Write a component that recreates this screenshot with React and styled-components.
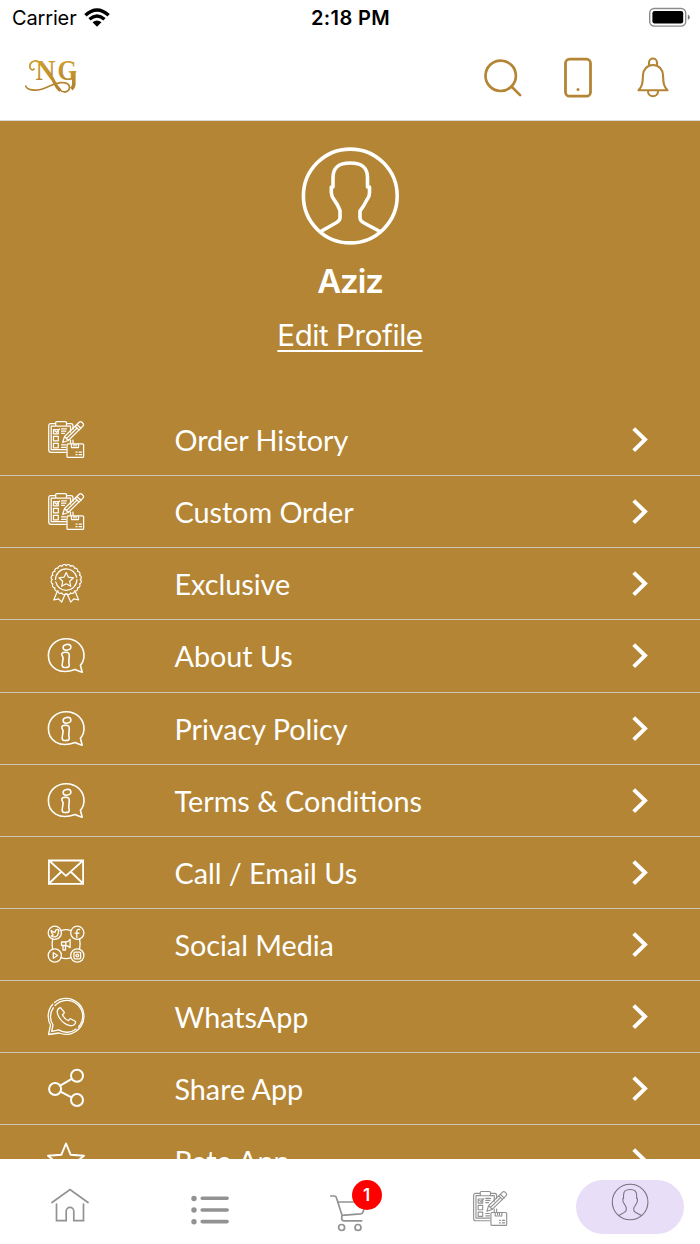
import React from "react";
import styled, { createGlobalStyle } from "styled-components";

const gold = "#b38534";

const GlobalStyle = createGlobalStyle`
  * { box-sizing: border-box; }
  body { margin: 0; background: #fff; }
`;

const Screen = styled.div`
  width: 700px;
  height: 1244px;
  display: flex;
  flex-direction: column;
  overflow: hidden;
  background: #fff;
  font-family: Inter, "Liberation Sans", sans-serif;
`;

const StatusBar = styled.header`
  height: 35px;
  flex: none;
  display: grid;
  grid-template-columns: 1fr auto 1fr;
  align-items: center;
  padding: 0 10px 0 12px;
  color: #000;
`;

const Carrier = styled.div`
  display: flex;
  align-items: center;
  gap: 7px;
  font-size: 20px;
  line-height: 36px;
  letter-spacing: -0.15px;

  svg {
    margin-bottom: 2px;
  }
`;

const Clock = styled.div`
  font-size: 20px;
  font-weight: 600;
  line-height: 36px;
  letter-spacing: 0.35px;
  margin-right: 1px;
`;

const BatterySlot = styled.div`
  display: flex;
  justify-content: flex-end;
  padding-bottom: 1px;
`;

const TopBar = styled.div`
  height: 86px;
  flex: none;
  display: flex;
  align-items: center;
  justify-content: space-between;
  padding: 0 27px 2px 22px;
  border-bottom: 1px solid #d9d8d8;
`;

const Actions = styled.div`
  display: flex;
  align-items: center;
  gap: 35.5px;
`;

const Content = styled.main`
  flex: 1;
  min-height: 0;
  overflow: hidden;
  background: ${gold};
  color: #fff;
`;

const Profile = styled.section`
  height: 283px;
  display: flex;
  flex-direction: column;
  align-items: center;
  padding-top: 25px;
`;

const Name = styled.h1`
  margin: 13px 0 0;
  font-size: 33px;
  line-height: 44px;
  font-weight: 600;
  letter-spacing: -1.1px;
`;

const EditLink = styled.a`
  margin-top: 14px;
  font-size: 29.5px;
  line-height: 36px;
  letter-spacing: -0.43px;
  color: #fff;
  text-decoration: underline;
  text-decoration-thickness: 2px;
  text-underline-offset: 4px;
  text-decoration-skip-ink: none;
`;

const Row = styled.div`
  height: 72.15px;
  display: grid;
  grid-template-columns: 38px 1fr 20px;
  column-gap: 89.5px;
  align-items: center;
  padding: 0 50px 1px 47px;
  border-bottom: 1.2px solid #cdc5b8;
`;

const Label = styled.span`
  font-family: Lato, sans-serif;
  font-size: 28.8px;
  line-height: 36px;
  letter-spacing: ${(p) => (p.$ligatures ? "0" : "-0.04px")};
  padding-top: 2px;
  white-space: nowrap;
`;

const TabBar = styled.nav`
  height: 85px;
  flex: none;
  display: grid;
  grid-template-columns: repeat(5, 1fr);
  background: #fff;
  color: #929292;
`;

const Tab = styled.div`
  display: flex;
  justify-content: center;
  align-items: flex-start;
  padding-top: ${(p) => p.$top}px;
`;

const ActivePill = styled.div`
  width: 108px;
  height: 54px;
  border-radius: 27px;
  background: #e8def7;
  color: #77737d;
  display: flex;
  justify-content: center;
  padding-top: 3px;
`;

const CartBox = styled.div`
  position: relative;
  width: 40px;
  height: 40px;
`;

const Badge = styled.span`
  position: absolute;
  left: 21.5px;
  top: -14.5px;
  width: 30px;
  height: 30px;
  border-radius: 50%;
  background: #f00;
  color: #fff;
  font-size: 17px;
  font-weight: 600;
  line-height: 30px;
  text-align: center;
`;

const Glyph = styled.svg`
  display: block;
  flex: none;
  overflow: visible;
  fill: none;
  stroke: currentColor;
  stroke-width: ${(p) => p.$stroke || 1.6};
  stroke-linecap: round;
  stroke-linejoin: round;
`;

const Icon = ({ w = 38, h = 38, box, stroke, color, children }) => (
  <Glyph width={w} height={h} viewBox={box || `0 0 ${w} ${h}`} $stroke={stroke} color={color}>
    {children}
  </Glyph>
);

const Logo = () => (
  <svg width="60" height="44" viewBox="22 56 60 44">
    <defs>
      <linearGradient id="sheen" gradientUnits="userSpaceOnUse" x1="0" y1="60" x2="0" y2="95">
        <stop offset="0" stopColor="#cfa02e" />
        <stop offset="1" stopColor="#ad7d30" />
      </linearGradient>
    </defs>
    <g fill="url(#sheen)" fontFamily="Liberation Serif, serif" fontSize="29" fontWeight="700">
      <text x="35.500" y="81" textLength="20" lengthAdjust="spacingAndGlyphs">N</text>
      <text x="57.500" y="81.300" textLength="19.500" lengthAdjust="spacingAndGlyphs">G</text>
    </g>
    <g fill="none" stroke="url(#sheen)" strokeLinecap="round">
      <path strokeWidth="1.700" d="M38 62.300c-5-1.500-9 2-8 6.200.6 2.500 3 3 4 1.500" />
      <path strokeWidth="3.200" d="M51.500 78c3 5 5 11 9 13.500" strokeLinecap="butt" />
      <path strokeWidth="1.700" d="M60 91c3 3 9 2.500 9.500-2 .4-4-4-6-9-5.300-8 1-13 5-19 6.500-6 1.500-14 1.300-15.700-3" />
      <path strokeWidth="3.600" d="M73.800 72v13q0 3-2.500 5" strokeLinecap="butt" />
    </g>
  </svg>
);

const Wifi = () => (
  <Icon w={26} h={19} stroke={3.4}>
    <path strokeLinecap="butt" d="M1.400 7.200Q13-3.300 24.600 7.200M5.500 11.300q7.500-6.400 15 0" />
    <path fill="currentColor" stroke="none" d="M8.500 14.200q4.500-3.600 9 0L13 18.800Z" />
  </Icon>
);

const Battery = () => (
  <Icon w={41} h={19} stroke={1.4}>
    <rect x=".7" y=".5" width="36" height="17.600" rx="4.500" stroke="#8b8b8b" />
    <rect x="3.400" y="3" width="30.800" height="12.600" rx="2.300" fill="#000" stroke="none" />
    <path d="M38.800 6.500q2 1 2 2.800t-2 2.800Z" fill="#777" stroke="none" />
  </Icon>
);

const SearchIcon = () => (
  <Icon w={40} h={42} color={gold} stroke={2.7}>
    <circle cx="18.700" cy="19.800" r="15.200" />
    <path d="m29.500 30.500 8.600 8.600" />
  </Icon>
);

const PhoneIcon = () => (
  <Icon w={40} h={42} color={gold} stroke={2.8}>
    <rect x="7.500" y="3.200" width="25" height="37" rx="4" />
    <circle cx="20" cy="33.500" r="1.500" fill="currentColor" stroke="none" />
  </Icon>
);

const BellIcon = () => (
  <Icon w={40} h={42} color={gold} stroke={2.1}>
    <path d="M16 9.600V6.500a4 4 0 0 1 8 0v3.100M20 9c-6 0-9.700 4.500-10 10-.4 7-.2 11-4.500 15.300h29c-4.300-4.300-4.100-8.300-4.500-15.300-.3-5.500-4-10-10-10ZM15 35.300a5 5 0 0 0 10 0" />
  </Icon>
);

const PersonIcon = ({ size, stroke }) => (
  <Icon w={size} h={size} box="0 0 100 100" stroke={stroke}>
    <circle cx="50.300" cy="50" r="46.900" />
    <path d="M20.700 85.500 34 78q6-3 6-6v-7.500L37.500 59 34 53.500q-2.500-3-2.700-7V41H33V32C33 20 40 17 50.300 17S67.500 20 67.500 32v9h2v6q0 4-2.700 7l-3.300 6-3.500 5v7q0 3 5 5.500l15 8" />
  </Icon>
);

const OrderIcon = ({ w = 38, stroke = 1.25 }) => (
  <Icon w={w} h={w} box="0 0 38 38" stroke={stroke}>
    <path d="M8.500 3.500H4Q1.700 3.500 1.700 6v24q0 2.400 2.500 2.400H19M19.500 3.500H24q2 0 2 2.500v3M8.500 6H4.200v23.700H19M19.500 6h4v6M26 20v3M23.500 20v3" />
    <rect x="8.700" y="1.600" width="10.800" height="4.500" rx="1" />
    <path d="M6.500 9.500h4.800v4.300H6.500ZM6.500 16.300h4.800v4.500H6.500ZM6.500 23.300h4.800v4.500H6.500ZM8 11l1.500 1.300L12.500 9M14.500 8.800h5M14.500 11h4.500M14.500 13.300h3M14.500 24.800h4M14.500 27.300h4" />
    <path d="m15.700 22.500 1.800-6L32.200 2.300q1.300-1.200 2.700 0l1 1q1.400 1.400 0 2.800L21.300 20.500ZM17.500 16.500l3.800 4M30 4.500l4 4M28.300 6.200l3.900 4M19.500 18.500 29.800 8.300" />
    <rect x="20" y="23.800" width="16.600" height="13.600" rx="1" />
    <path d="M24.500 24v3.500h7V24M27 24v2M29 24v2M29 32h1M32 32h2.500M29 34.700h1M32 34.700h2.500" />
  </Icon>
);

const scallops = Array.from({ length: 20 }, (_, i) => {
  const at = (k) => [19.200 + 14 * Math.sin((k * Math.PI) / 10), 15.600 + 14 * Math.cos((k * Math.PI) / 10)];
  const [x, y] = at(i);
  const [nx, ny] = at(i + 1);
  return `M${x} ${y}A2.400 2.400 0 0 0 ${nx} ${ny}`;
}).join("");

const AwardIcon = () => (
  <Icon stroke={1.2}>
    <path d={scallops} />
    <circle cx="19.200" cy="15.600" r="10.700" strokeDasharray="31 2.600" />
    <path d="m19.200 8.500 2.200 4.700 5.100.6-3.800 3.500 1 5-4.500-2.500-4.500 2.500 1-5-3.800-3.500 5.100-.6Z" />
    <path d="m10 28-3.200 8 4.800-1.100 3.100 3.200 3.500-8M28.400 28l3.200 8-4.800-1.100-3.100 3.200-3.500-8" />
  </Icon>
);

const InfoIcon = () => (
  <Icon stroke={1.6}>
    <path d="M35.200 36.200q-3.800-1.200-7.100-2.700C12 39.500 1.400 31 1.400 19.500 1.400 9.500 9.500 2.800 19.300 2.800S37 9.800 37 19.600c0 3.700-1.300 7.200-3.600 9.700Z" />
    <ellipse cx="20" cy="11.300" rx="3.900" ry="2.800" transform="rotate(-12 20 11.300)" />
    <path d="M15 19.300c-.8-2.200.8-3 3.500-3 3.700 0 4 1.300 3.700 4.500l-.4 5.200c-.2 1.700 1 2 .3 4.200q-.5 1.500-4.600 1.300c-2.200 0-2.600-1.800-2.200-3.800l.8-5.200c.2-1.600-.6-1.700-1.100-3.200Z" />
  </Icon>
);

const MailIcon = () => (
  <Icon stroke={1.8}>
    <path strokeLinejoin="miter" d="M1.900 7.500h34.200v23.300H1.900ZM2 7.500l17 15.300L36 7.500M2 30.500 14 19M36 30.500 24 19" />
  </Icon>
);

const SocialIcon = () => (
  <Icon stroke={1.3}>
    <circle cx="7.800" cy="7.800" r="6.600" />
    <circle cx="30.300" cy="7.800" r="6.600" />
    <circle cx="7.800" cy="30.500" r="6.600" />
    <circle cx="30.300" cy="30.500" r="6.600" />
    <path d="M14 5.600q5-2 10 0M14 32.700q5 2 10 0M5.600 14q-1 5 0 10M32.600 14q1 5 0 10" />
    <path d="M4.200 5.500q1.700 2 4 1.700c0-3 2.200-3.200 3.600-2l-.6 3.100c-.5 4-4 4.400-7 2.700l2-1Q4.200 8.400 4.200 5.500M32.600 4.500c-2-.5-2.800.5-2.800 2.100v6M28 8.200h4M6.300 27.700v5.500l4.300-2.700Z" />
    <rect x="27" y="27.200" width="6.600" height="6.600" rx="1" />
    <circle cx="30.300" cy="30.500" r="1.300" />
    <path d="M14.500 17h4.300q3-.5 4.300-2.800v8.500q-2-2-4.300-2.200h-4.300ZM16 21v4h2.500v-4M18.800 17v3.500" />
  </Icon>
);

const WhatsAppIcon = () => (
  <Icon stroke={1.3}>
    <path d="M7.500 5.500A18 18 0 1 1 12 36l-10.500 1.500 2-9.500A18 18 0 0 1 5.700 7.300" />
    <path d="M31.500 30A15.300 15.300 0 0 0 8 8.500M6.300 10.800A15.300 15.300 0 0 0 6 28l-1.300 6.400 7-1.500a15.300 15.300 0 0 0 17.500-.8" />
    <path d="M13.500 10.700c-4 1-4 5-1.800 9 3 5.300 6.800 8 11.500 9 3.200.3 5.500-1.500 5.400-4.200l-5-2.800q-1 .1-2.100 2-4-1.400-6-6 2-1 1.700-2.500Z" />
  </Icon>
);

const ShareIcon = () => (
  <Icon stroke={2}>
    <circle cx="8.100" cy="20" r="6" />
    <circle cx="30" cy="6.700" r="6" />
    <circle cx="30" cy="31" r="6" />
    <path d="m13.200 16.700 11.600-6.900M13.500 22.700l11 5.700" />
  </Icon>
);

const StarIcon = () => (
  <Icon stroke={1.9}>
    <path d="m19 2.500 4.600 11.200 13.400 1-10.300 8.500 3.200 12.500L19 29 8 35.700l3.300-12.500L1 14.700l13.400-1Z" />
  </Icon>
);

const Chevron = () => (
  <Icon w={20} h={26} stroke={4}>
    <path strokeLinecap="butt" strokeLinejoin="miter" d="m3.700 2.600 11.300 11-11.300 11" />
  </Icon>
);

const HomeIcon = () => (
  <Icon w={40} h={38} stroke={1.7}>
    <path strokeLinejoin="miter" d="M2 15.500 20 2.500l18 13M6.500 17V33.700h9.700V24.200a3.800 3.800 0 0 1 7.600 0v9.500h9.700V17" />
  </Icon>
);

const ListIcon = () => (
  <Icon w={40} h={38} stroke={3.6}>
    <path d="M12.200 6.200h24.900M12.200 18h24.900M12.200 29.600h24.900" />
    <g fill="currentColor" stroke="none">
      <circle cx="4" cy="6.500" r="2.700" />
      <circle cx="4" cy="18" r="2.700" />
      <circle cx="4" cy="29.700" r="2.700" />
    </g>
  </Icon>
);

const CartIcon = () => (
  <Icon w={40} h={40} stroke={1.7}>
    <path d="M.8 2h3.500q1.800.2 2.300 2.200L12 21.300l18.700-1.400q1.700-.2 2.300-2L36.500 8H7.900M12 21.500q-1.200 5 2 5.300h17.700" />
    <circle cx="11.600" cy="33.500" r="3" />
    <circle cx="28" cy="33.500" r="3" />
  </Icon>
);

const items = [
  ["Order History", OrderIcon],
  ["Custom Order", OrderIcon],
  ["Exclusive", AwardIcon],
  ["About Us", InfoIcon],
  ["Privacy Policy", InfoIcon],
  ["Terms & Conditions", InfoIcon],
  ["Call / Email Us", MailIcon],
  ["Social Media", SocialIcon],
  ["WhatsApp", WhatsAppIcon],
  ["Share App", ShareIcon],
  ["Rate App", StarIcon],
];

export default function App() {
  return (
    <>
      <GlobalStyle />
      <Screen>
        <StatusBar>
          <Carrier>Carrier <Wifi /></Carrier>
          <Clock>2:18 PM</Clock>
          <BatterySlot><Battery /></BatterySlot>
        </StatusBar>
        <TopBar>
          <Logo />
          <Actions>
            <SearchIcon />
            <PhoneIcon />
            <BellIcon />
          </Actions>
        </TopBar>
        <Content>
          <Profile>
            <PersonIcon size={100} stroke={3.6} />
            <Name>Aziz</Name>
            <EditLink>Edit Profile</EditLink>
          </Profile>
          {items.map(([label, Symbol]) => (
            <Row key={label}>
              <Symbol />
              <Label $ligatures={label.includes("ti")}>{label}</Label>
              <Chevron />
            </Row>
          ))}
        </Content>
        <TabBar>
          <Tab $top={28}><HomeIcon /></Tab>
          <Tab $top={33}><ListIcon /></Tab>
          <Tab $top={35}><CartBox><CartIcon /><Badge>1</Badge></CartBox></Tab>
          <Tab $top={31}><OrderIcon w={36} stroke={1.2} /></Tab>
          <Tab $top={20.5}><ActivePill><PersonIcon size={38} stroke={2.8} /></ActivePill></Tab>
        </TabBar>
      </Screen>
    </>
  );
}
